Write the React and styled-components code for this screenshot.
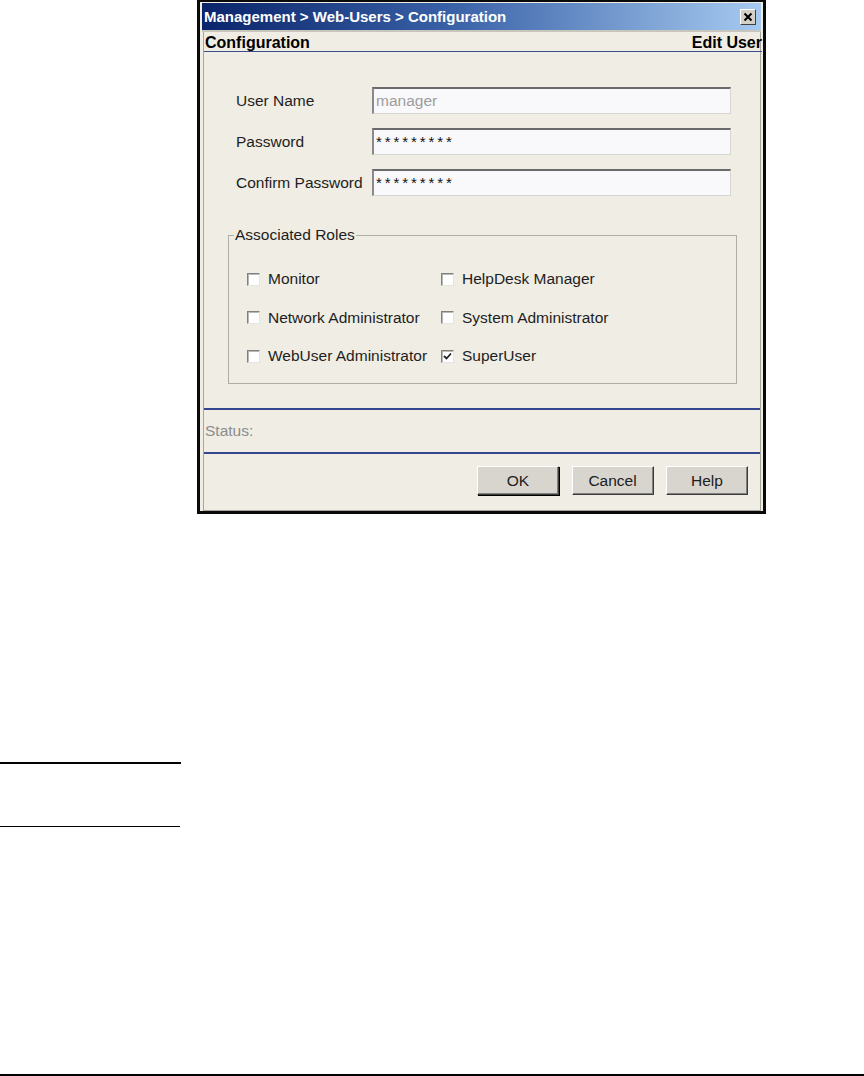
import styled, { createGlobalStyle } from "styled-components";

const GlobalStyle = createGlobalStyle`
	body {
		margin: 0;
		background: #ffffff;
		font-family: "Liberation Sans", Arial, sans-serif;
	}
`;

const fields = [
	{ label: "User Name", value: "manager", disabled: true },
	{ label: "Password", value: "*********" },
	{ label: "Confirm Password", value: "*********" },
];

const roles = [
	{ name: "Monitor", checked: false },
	{ name: "HelpDesk Manager", checked: false },
	{ name: "Network Administrator", checked: false },
	{ name: "System Administrator", checked: false },
	{ name: "WebUser Administrator", checked: false },
	{ name: "SuperUser", checked: true },
];

const Page = styled.div`
	display: flex;
	flex-direction: column;
	width: 864px;
	height: 1076px;
	overflow: hidden;
	background: #fff;
`;

const Dialog = styled.div`
	box-sizing: border-box;
	width: 569px;
	margin-left: 197px;
	border: 3px solid #0a0a0a;
	border-top-width: 2px;
	padding: 1px 2px 0 2px;
	background: #efede4;
	display: flex;
	flex-direction: column;
`;

const TitleBar = styled.div`
	height: 27px;
	display: flex;
	align-items: center;
	justify-content: space-between;
	padding-left: 2px;
	background: linear-gradient(90deg, #0a246a 0%, #3a62a8 45%, #a6caf0 100%);
	border-bottom: 2px solid #c8c6bc;

	.title__text {
		color: #fff;
		font-weight: bold;
		font-size: 15px;
		line-height: 27px;
		white-space: nowrap;
	}
`;

const CloseButton = styled.div`
	box-sizing: border-box;
	width: 16px;
	height: 16px;
	margin-right: 5px;
	background: #d4d0c8;
	border: 1px solid;
	border-color: #ffffff #404040 #404040 #ffffff;
	display: flex;
	align-items: center;
	justify-content: center;
`;

const Panel = styled.div`
	margin-left: 1px;
	border: 1px solid #a7a69e;
	border-top: none;
	display: flex;
	flex-direction: column;
`;

const PanelHeader = styled.div`
	display: flex;
	justify-content: space-between;
	padding: 2px 0 0 1px;
	line-height: 17px;
	font-size: 16px;
	font-weight: bold;
	color: #000;
	border-bottom: 1px solid #3d4c8e;
	margin-right: -2px;
`;

const FormArea = styled.div`
	padding: 35px 23px 24px 24px;
	display: flex;
	flex-direction: column;
`;

const Fields = styled.div`
	display: grid;
	grid-template-columns: 136px 1fr;
	row-gap: 14px;
	align-items: center;
	margin: 0 6px 0 8px;
	font-size: 15.5px;
	color: #1e1e1e;
`;

const TextBox = styled.div`
	box-sizing: border-box;
	height: 27px;
	background: #f9f9fb;
	border-style: solid;
	border-width: 2px 1px 1px 2px;
	border-color: #6a6a6a #d6d6d2 #d6d6d2 #8a8a8a;
	padding-left: 2px;
	line-height: 23px;
	font-size: ${(p) => (p.$masked ? "15px" : "15.5px")};
	letter-spacing: ${(p) => (p.$masked ? "2.9px" : "0")};
	color: ${(p) => (p.$disabled ? "#9c9c9c" : "#111")};
`;

const Roles = styled.fieldset`
	margin: 30px 0 0 0;
	padding: 0 0 0 5px;
	border: 1px solid #aeada6;
	min-width: 0;

	legend {
		padding: 0 1px;
		font-size: 15.5px;
		line-height: 18px;
		color: #1e1e1e;
	}
`;

const RoleGrid = styled.div`
	display: grid;
	grid-template-columns: 194px auto;
	grid-auto-rows: 20px;
	row-gap: 18.5px;
	padding: 25px 0 17px 13px;
`;

const RoleItem = styled.label`
	display: flex;
	align-items: center;
	gap: 8px;
	font-size: 15.5px;
	color: #1e1e1e;
	white-space: nowrap;
`;

const CheckBox = styled.span`
	box-sizing: border-box;
	width: 13px;
	height: 13px;
	background: #fff;
	border: 1px solid;
	border-color: #808080 #e4e4e0 #e4e4e0 #808080;
	box-shadow: inset 1px 1px 0 #b8b8b4;
	display: flex;
	align-items: center;
	justify-content: center;
`;

const StatusBar = styled.div`
	height: 42px;
	display: flex;
	align-items: center;
	padding-left: 1px;
	border-top: 2px solid #34468f;
	border-bottom: 2px solid #34468f;
	font-size: 15.5px;
	color: #8c8c8c;
`;

const ButtonRow = styled.div`
	display: flex;
	justify-content: flex-end;
	gap: 12.5px;
	padding: 12px 12px 15px 0;
`;

const Button = styled.button`
	box-sizing: border-box;
	width: 82px;
	height: 29px;
	background: #d8d5cf;
	border: 1px solid;
	border-color: #ffffff #3c3c3c #3c3c3c #ffffff;
	box-shadow: ${(p) =>
		p.$default
			? "inset -1px -1px 0 #808080, 1px 1px 0 #000"
			: "inset -1px -1px 0 #808080"};
	font-family: "Liberation Sans", Arial, sans-serif;
	font-size: 15.5px;
	color: #202020;
	padding: 0;
`;

const Rule = styled.div`
	width: ${(p) => p.$width}px;
	height: ${(p) => p.$thickness}px;
	margin-top: ${(p) => p.$top}px;
	background: #000;
`;

function CheckMark() {
	return (
		<svg width="9" height="9" viewBox="0 0 9 9">
			<polyline
				points="1,4 3.5,6.5 8,1.5"
				fill="none"
				stroke="#222"
				strokeWidth="1.8"
			/>
		</svg>
	);
}

function App() {
	return (
		<Page>
			<GlobalStyle />
			<Dialog>
				<TitleBar>
					<span className={"title__text"}>
						Management &gt; Web-Users &gt; Configuration
					</span>
					<CloseButton>
						<svg width="10" height="10" viewBox="0 0 10 10">
							<path
								d="M1.5 1.5 L8.5 8.5 M8.5 1.5 L1.5 8.5"
								stroke="#000"
								strokeWidth="2"
							/>
						</svg>
					</CloseButton>
				</TitleBar>
				<Panel>
					<PanelHeader>
						<span>Configuration</span>
						<span>Edit User</span>
					</PanelHeader>
					<FormArea>
						<Fields>
							{fields.map((campo) => [
								<span key={campo.label + "-l"}>{campo.label}</span>,
								<TextBox
									key={campo.label + "-v"}
									$disabled={campo.disabled}
									$masked={!campo.disabled}
								>
									{campo.value}
								</TextBox>,
							])}
						</Fields>
						<Roles>
							<legend>Associated Roles</legend>
							<RoleGrid>
								{roles.map((papel) => (
									<RoleItem key={papel.name}>
										<CheckBox>{papel.checked && <CheckMark />}</CheckBox>
										{papel.name}
									</RoleItem>
								))}
							</RoleGrid>
						</Roles>
					</FormArea>
					<StatusBar>Status:</StatusBar>
					<ButtonRow>
						<Button $default>OK</Button>
						<Button>Cancel</Button>
						<Button>Help</Button>
					</ButtonRow>
				</Panel>
			</Dialog>
			<Rule $width={181} $thickness={2} $top={248} />
			<Rule $width={180} $thickness={1} $top={62} />
			<Rule $width={864} $thickness={2} $top={247} />
		</Page>
	);
}

export default App;
